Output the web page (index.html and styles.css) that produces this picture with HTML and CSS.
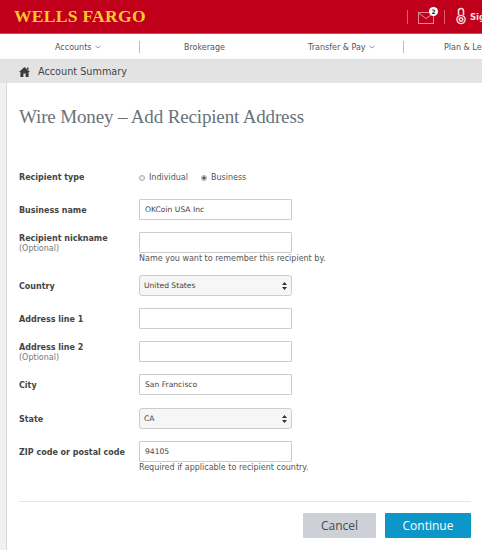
FILE: index.html
```html
<!DOCTYPE html>
<html lang="en">
<head>
<meta charset="utf-8">
<title>Wire Money</title>
<link rel="stylesheet" href="styles.css">
</head>
<body>
<header class="topbar">
  <div class="logo">WELLS FARGO</div>
  <div class="top-actions">
    <span class="top-sep"></span>
    <span class="mail">
      <svg width="16" height="12" viewBox="0 0 16 12" class="mail-icon"><rect x="0.5" y="0.5" width="15" height="11" fill="none" stroke="#e58a97"/><path d="M0.5 1 L8 6.5 L15.5 1" fill="none" stroke="#e58a97"/></svg>
      <span class="badge">2</span>
    </span>
    <span class="top-sep"></span>
    <svg width="10" height="19" viewBox="0 0 10 19" class="lock"><path d="M2.5 8V4a2.5 2.5 0 0 1 5 0V8" fill="none" stroke="#f6d5d9" stroke-width="1.6"/><circle cx="5" cy="12.5" r="4.8" fill="#f6d5d9"/><circle cx="5" cy="12.5" r="3" fill="none" stroke="#c0001b"/><circle cx="5" cy="12.5" r="1" fill="#c0001b"/></svg>
    <span class="sign">Sign Off</span>
  </div>
</header>
<nav class="mainnav">
  <a class="nav-item nav-accounts">Accounts <svg class="chev" width="6" height="4" viewBox="0 0 6 4"><path d="M0.5 1 L3 3 L5.5 1" fill="none" stroke="#999"/></svg></a>
  <span class="nav-sep"></span>
  <a class="nav-item nav-brokerage">Brokerage</a>
  <a class="nav-item nav-transfer">Transfer &amp; Pay <svg class="chev" width="6" height="4" viewBox="0 0 6 4"><path d="M0.5 1 L3 3 L5.5 1" fill="none" stroke="#999"/></svg></a>
  <span class="nav-sep"></span>
  <a class="nav-item nav-plan">Plan &amp; Learn</a>
</nav>
<div class="crumb">
  <svg width="11" height="10" viewBox="0 0 11 10" class="home"><path d="M5.5 0 L11 5 L9.6 5 V10 H6.6 V6.5 H4.4 V10 H1.4 V5 H0 Z M8 0.5 H9.5 V3 L8 2 Z" fill="#3d3d3d"/></svg>
  <span>Account Summary</span>
</div>
<main class="page">
  <div class="content">
    <h1 class="title">Wire Money – Add Recipient Address</h1>
    <form class="form">
      <div class="row row-type">
        <div class="label">Recipient type</div>
        <div class="radios">
          <span class="radio"></span><span class="radio-text">Individual</span>
          <span class="radio radio-on"></span><span>Business</span>
        </div>
      </div>
      <div class="row">
        <div class="label">Business name</div>
        <div class="input">OKCoin USA Inc</div>
      </div>
      <div class="row">
        <div class="label label-top">Recipient nickname<small>(Optional)</small></div>
        <div><div class="input"></div><div class="help">Name you want to remember this recipient by.</div></div>
      </div>
      <div class="row">
        <div class="label">Country</div>
        <div class="select">United States<svg width="5" height="8" viewBox="0 0 5 8"><path d="M2.5 0 L5 3 H0 Z M2.5 8 L5 5 H0 Z" fill="#333"/></svg></div>
      </div>
      <div class="row">
        <div class="label">Address line 1</div>
        <div class="input"></div>
      </div>
      <div class="row">
        <div class="label label-top">Address line 2<small>(Optional)</small></div>
        <div class="input"></div>
      </div>
      <div class="row">
        <div class="label">City</div>
        <div class="input">San Francisco</div>
      </div>
      <div class="row row-state">
        <div class="label">State</div>
        <div class="select">CA<svg width="5" height="8" viewBox="0 0 5 8"><path d="M2.5 0 L5 3 H0 Z M2.5 8 L5 5 H0 Z" fill="#333"/></svg></div>
      </div>
      <div class="row">
        <div class="label">ZIP code or postal code</div>
        <div><div class="input">94105</div><div class="help">Required if applicable to recipient country.</div></div>
      </div>
    </form>
    <div class="actions">
      <button class="btn btn-cancel" type="button">Cancel</button>
      <button class="btn btn-continue" type="button">Continue</button>
    </div>
  </div>
</main>
</body>
</html>
```
FILE: styles.css
```css
* { box-sizing: border-box; }
html, body { margin: 0; padding: 0; }
body {
  width: 482px;
  height: 550px;
  overflow: hidden;
  background: #fff;
  font-family: "DejaVu Sans", Verdana, sans-serif;
  color: #444;
}
.topbar {
  height: 34px;
  background: #c0001b;
  border-bottom: 1px solid #d9455a;
  display: flex;
  align-items: center;
  justify-content: space-between;
  padding-left: 14px;
  overflow: hidden;
}
.logo {
  font-family: "Liberation Serif", serif;
  font-weight: 700;
  font-size: 17.5px;
  letter-spacing: 0.3px;
  color: #fcc92c;
  white-space: nowrap;
}
.top-actions {
  display: flex;
  align-items: center;
  flex: none;
  width: 75px;
  white-space: nowrap;
}
.top-sep { width: 1px; height: 14px; background: #d9606f; flex: none; }
.mail { position: relative; display: block; width: 16px; height: 12px; margin: 2px 10px 0 10px; flex: none; }
.mail-icon { display: block; }
.badge {
  position: absolute;
  top: -5px;
  right: -4px;
  width: 9px;
  height: 9px;
  border-radius: 50%;
  background: #fff;
  color: #222;
  font-size: 6px;
  line-height: 9px;
  font-weight: 700;
  text-align: center;
}
.lock { flex: none; margin-left: 11px; }
.sign { color: #f9dfe2; font-size: 8.5px; font-weight: 700; margin-left: 4px; }
.mainnav {
  height: 26px;
  display: flex;
  align-items: center;
  padding-top: 1px;
  background: #fff;
  border-bottom: 1px solid #ddd;
  font-size: 8px;
  color: #555;
  white-space: nowrap;
  overflow: hidden;
}
.nav-item { display: block; flex: none; }
.nav-accounts { margin-left: 55px; width: 84px; }
.nav-brokerage { margin-left: 44px; width: 41px; }
.nav-transfer { margin-left: 83px; width: 95px; }
.nav-plan { margin-left: 40px; }
.chev { margin-left: 1px; vertical-align: middle; }
.nav-sep { width: 1px; height: 12px; background: #bbb; flex: none; }
.crumb {
  height: 23px;
  background: #e3e3e3;
  display: flex;
  align-items: center;
  padding-left: 19px;
  gap: 8px;
  font-size: 9.7px;
  color: #444;
}
.home { flex: none; }
.page {
  height: 467px;
  background: #f1f1f1;
  padding-left: 6px;
}
.content {
  height: 100%;
  background: #fff;
  border-left: 1px solid #d8d8d8;
  padding: 22px 11px 0 12px;
}
.title {
  margin: 0 0 38px;
  font-family: "Liberation Serif", serif;
  font-weight: 400;
  font-size: 19px;
  letter-spacing: -0.15px;
  line-height: 23px;
  color: #69727a;
}
.form { display: flex; flex-direction: column; gap: 12px; }
.row { display: grid; grid-template-columns: 120px 153px; align-items: start; }
.row-type { margin-bottom: 4px; height: 17px; }
.row-state { margin-top: 1px; }
.label {
  font-size: 8px;
  font-weight: 700;
  color: #444;
  line-height: 11px;
  padding-top: 6px;
  white-space: nowrap;
}
.label-top { padding-top: 1px; height: 21px; }
.label small { display: block; font-size: 8px; font-weight: 400; color: #777; line-height: 10px; }
.radios { display: flex; align-items: center; font-size: 8px; color: #555; height: 11px; margin-top: 6px; }
.radio { width: 6px; height: 6px; border-radius: 50%; border: 1px solid #aaa; background: #eee; margin-right: 4px; flex: none; }
.radio-on { background: radial-gradient(circle, #555 0 1.2px, #eee 2px); }
.radio-text { margin-right: 13px; }
.input, .select {
  width: 153px;
  height: 21px;
  border: 1px solid #ccc;
  border-radius: 1px;
  font-size: 7.6px;
  line-height: 19px;
  color: #444;
  padding-left: 5px;
  background: #fff;
}
.select {
  background: #f6f6f6;
  border-radius: 3px;
  padding: 0 4px;
  display: flex;
  align-items: center;
  justify-content: space-between;
}
.help { font-size: 8px; line-height: 10px; margin: 1px 0 -1px; color: #555; white-space: nowrap; }
.actions {
  margin-top: 29px;
  border-top: 1px solid #e6e6ea;
  padding-top: 11px;
  display: flex;
  justify-content: flex-end;
  gap: 9px;
}
.btn {
  height: 25px;
  border: 0;
  border-radius: 1px;
  font-family: "Open Sans", sans-serif;
  font-size: 12px;
  padding: 0;
}
.btn-cancel { width: 73px; background: #cdd0d6; color: #4a4a4a; }
.btn-continue { width: 86px; background: #0d97c8; color: #fff; }
```
